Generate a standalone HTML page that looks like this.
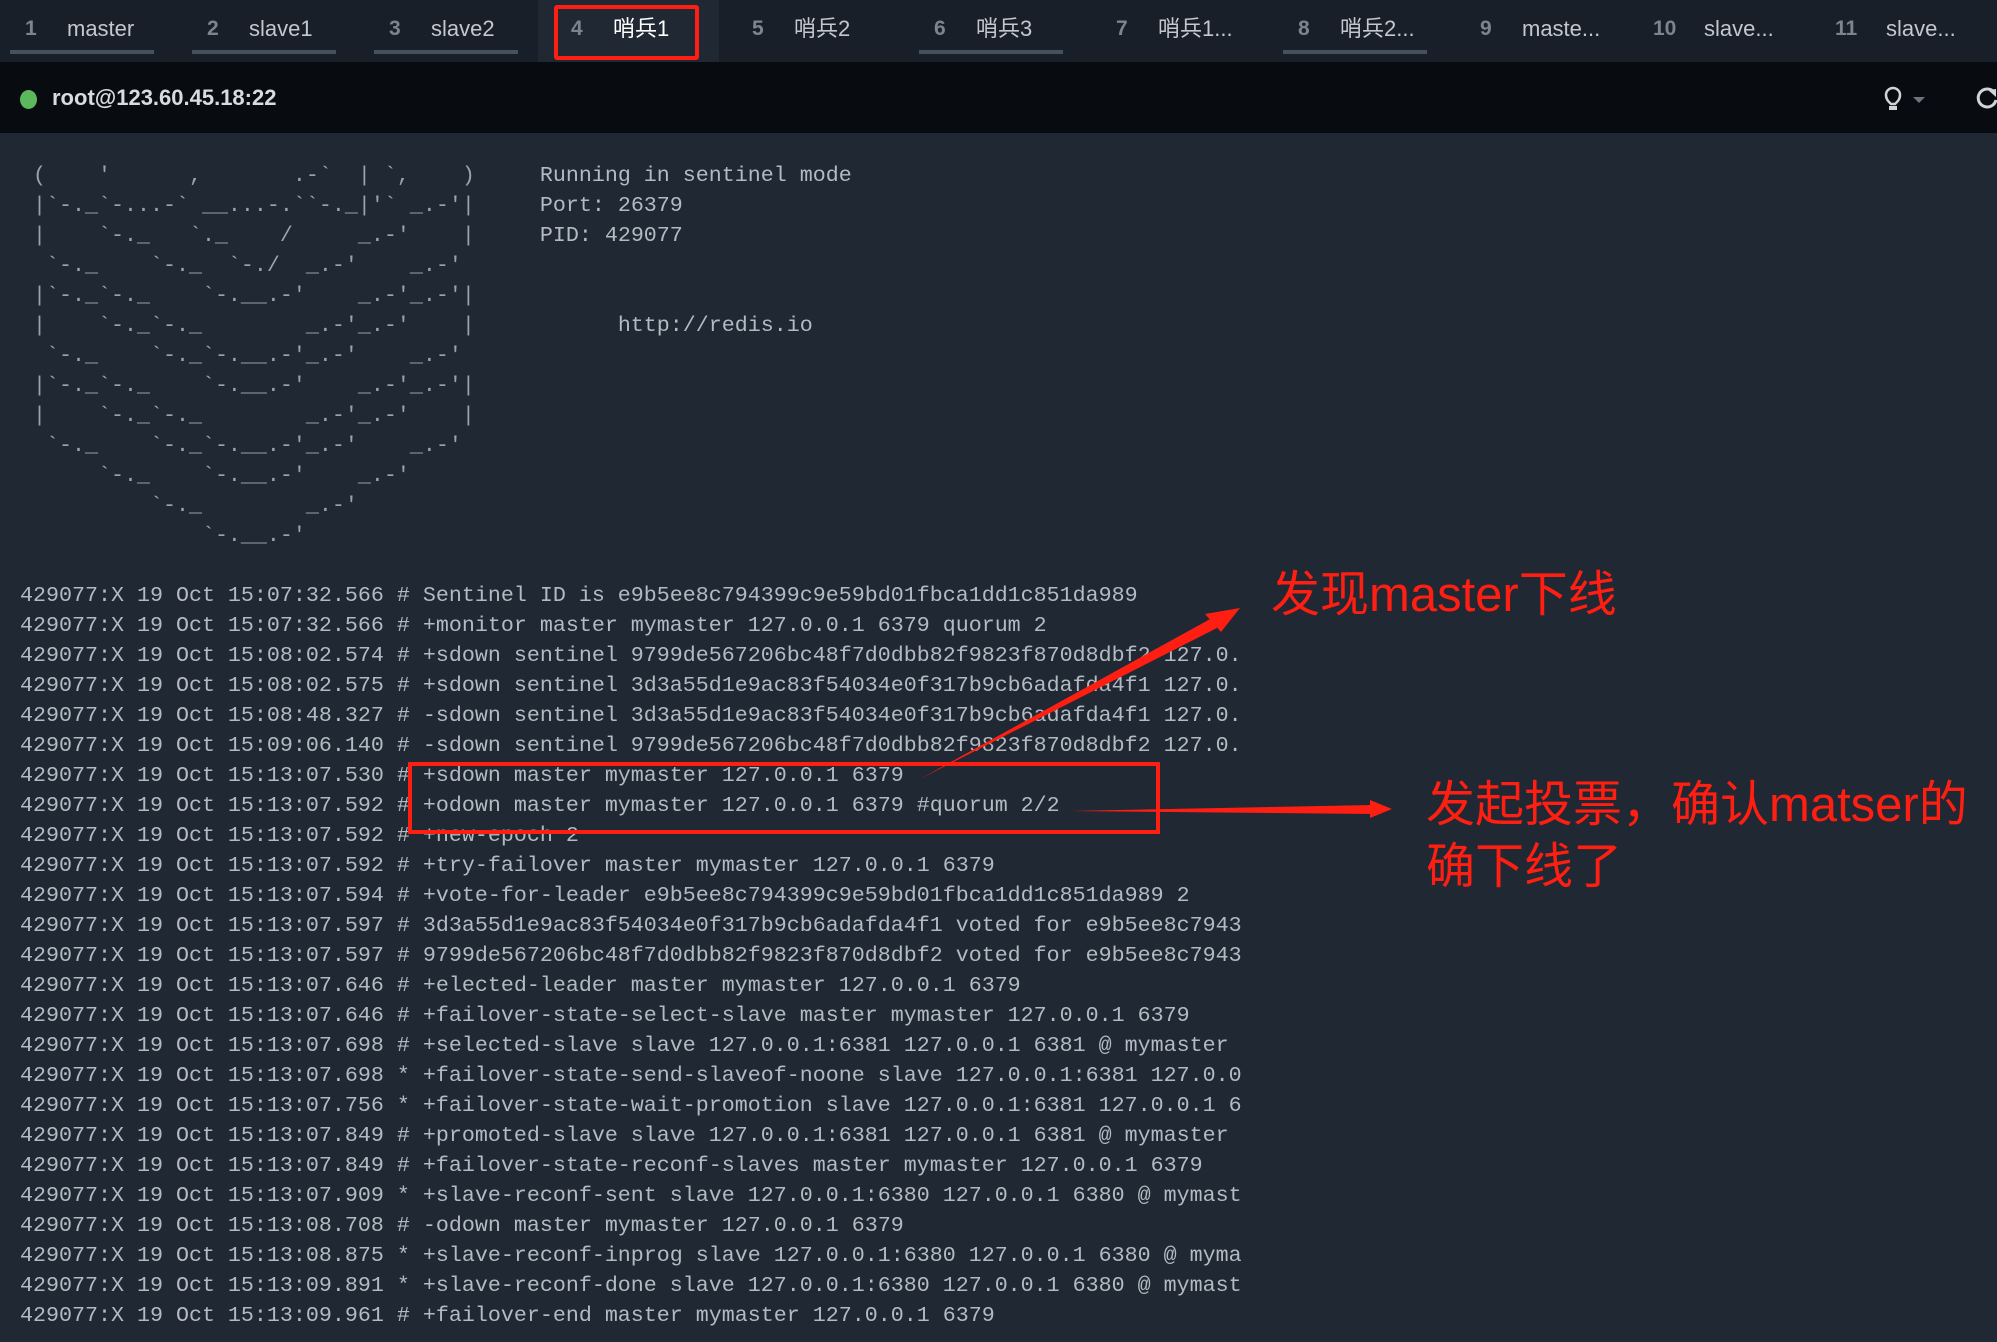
<!DOCTYPE html>
<html><head><meta charset="utf-8"><style>
body{margin:0;width:1997px;height:1342px;background:#1f2833;overflow:hidden;position:relative;font-family:"Liberation Sans","Noto Sans CJK SC",sans-serif}
.tabs{position:absolute;left:0;top:0;width:1997px;height:62px;background:#181f28}
.tab{position:absolute;top:0;height:62px}
.num{position:absolute;top:14px;line-height:30px;height:30px;font-size:21px;color:#7c848d;font-weight:bold}
.lab{position:absolute;top:14px;line-height:30px;height:30px;font-size:22px;color:#c3c8ce;white-space:nowrap}
.ul{position:absolute;top:50px;height:4px;background:#46515c}
.hdr{position:absolute;left:0;top:62px;width:1997px;height:71px;background:#080b0f}
pre{position:absolute;margin:0;font-family:"Liberation Mono",monospace;font-size:21.67px;line-height:30px;color:#b3bac2}
.red{position:absolute;color:#ff1e12;font-size:49px;line-height:62px;white-space:nowrap;font-family:"Liberation Sans","Noto Sans CJK SC",sans-serif}
</style></head><body>
<div class="tabs">
  <div style="position:absolute;left:538px;top:0;width:181px;height:62px;background:#1f2833"></div>
  <div style="position:absolute;left:554px;top:5px;width:137px;height:47px;border:4px solid #ff1e12;border-radius:3px"></div>
  <div class="tab" style="left:0"><span class="num" style="left:25px">1</span><span class="lab" style="left:67px">master</span><div class="ul" style="left:10px;width:144px"></div></div>
  <div class="tab" style="left:182px"><span class="num" style="left:25px">2</span><span class="lab" style="left:67px">slave1</span><div class="ul" style="left:10px;width:144px"></div></div>
  <div class="tab" style="left:364px"><span class="num" style="left:25px">3</span><span class="lab" style="left:67px">slave2</span><div class="ul" style="left:10px;width:144px"></div></div>
  <div class="tab" style="left:546px"><span class="num" style="left:25px">4</span><span class="lab" style="left:67px;color:#fff">哨兵1</span></div>
  <div class="tab" style="left:727px"><span class="num" style="left:25px">5</span><span class="lab" style="left:67px">哨兵2</span></div>
  <div class="tab" style="left:909px"><span class="num" style="left:25px">6</span><span class="lab" style="left:67px">哨兵3</span><div class="ul" style="left:10px;width:144px"></div></div>
  <div class="tab" style="left:1091px"><span class="num" style="left:25px">7</span><span class="lab" style="left:67px">哨兵1...</span></div>
  <div class="tab" style="left:1273px"><span class="num" style="left:25px">8</span><span class="lab" style="left:67px">哨兵2...</span><div class="ul" style="left:10px;width:144px"></div></div>
  <div class="tab" style="left:1455px"><span class="num" style="left:25px">9</span><span class="lab" style="left:67px">maste...</span></div>
  <div class="tab" style="left:1637px"><span class="num" style="left:16px">10</span><span class="lab" style="left:67px">slave...</span></div>
  <div class="tab" style="left:1819px"><span class="num" style="left:16px">11</span><span class="lab" style="left:67px">slave...</span></div>
</div>
<div class="hdr">
  <div style="position:absolute;left:20px;top:28px;width:17px;height:19px;border-radius:50%;background:#5cb85c"></div>
  <div style="position:absolute;left:52px;top:23px;font-size:22px;font-weight:bold;color:#d8dce0">root@123.60.45.18:22</div>
  <svg style="position:absolute;left:1880px;top:20px" width="120" height="34" viewBox="0 0 120 34">
    <path d="M11 22c-3-3-5-5-5-9a7 7 0 0 1 14 0c0 4-2 6-5 9z" fill="none" stroke="#d0d4d8" stroke-width="2.5"/>
    <rect x="9" y="24" width="8" height="4" fill="#d0d4d8"/>
    <path d="M33 15h12l-6 6z" fill="#6d747b"/>
    <path d="M114 10a9 9 0 1 0 2 8" fill="none" stroke="#d0d4d8" stroke-width="3"/>
    <path d="M108 8l8-1 0 8z" fill="#d0d4d8"/>
  </svg>
</div>
<pre style="left:20px;top:161px;color:#9aa2ab"> (    '      ,       .-`  | `,    )     <span style="color:#b3bac2">Running in sentinel mode</span>
 |`-._`-...-` __...-.``-._|'` _.-'|     <span style="color:#b3bac2">Port: 26379</span>
 |    `-._   `._    /     _.-'    |     <span style="color:#b3bac2">PID: 429077</span>
  `-._    `-._  `-./  _.-'    _.-'
 |`-._`-._    `-.__.-'    _.-'_.-'|
 |    `-._`-._        _.-'_.-'    |           <span style="color:#b3bac2">http://redis.io</span>
  `-._    `-._`-.__.-'_.-'    _.-'
 |`-._`-._    `-.__.-'    _.-'_.-'|
 |    `-._`-._        _.-'_.-'    |
  `-._    `-._`-.__.-'_.-'    _.-'
      `-._    `-.__.-'    _.-'
          `-._        _.-'
              `-.__.-'</pre>
<pre style="left:20px;top:581px">429077:X 19 Oct 15:07:32.566 # Sentinel ID is e9b5ee8c794399c9e59bd01fbca1dd1c851da989
429077:X 19 Oct 15:07:32.566 # +monitor master mymaster 127.0.0.1 6379 quorum 2
429077:X 19 Oct 15:08:02.574 # +sdown sentinel 9799de567206bc48f7d0dbb82f9823f870d8dbf2 127.0.
429077:X 19 Oct 15:08:02.575 # +sdown sentinel 3d3a55d1e9ac83f54034e0f317b9cb6adafda4f1 127.0.
429077:X 19 Oct 15:08:48.327 # -sdown sentinel 3d3a55d1e9ac83f54034e0f317b9cb6adafda4f1 127.0.
429077:X 19 Oct 15:09:06.140 # -sdown sentinel 9799de567206bc48f7d0dbb82f9823f870d8dbf2 127.0.
429077:X 19 Oct 15:13:07.530 # +sdown master mymaster 127.0.0.1 6379
429077:X 19 Oct 15:13:07.592 # +odown master mymaster 127.0.0.1 6379 #quorum 2/2
429077:X 19 Oct 15:13:07.592 # +new-epoch 2
429077:X 19 Oct 15:13:07.592 # +try-failover master mymaster 127.0.0.1 6379
429077:X 19 Oct 15:13:07.594 # +vote-for-leader e9b5ee8c794399c9e59bd01fbca1dd1c851da989 2
429077:X 19 Oct 15:13:07.597 # 3d3a55d1e9ac83f54034e0f317b9cb6adafda4f1 voted for e9b5ee8c7943
429077:X 19 Oct 15:13:07.597 # 9799de567206bc48f7d0dbb82f9823f870d8dbf2 voted for e9b5ee8c7943
429077:X 19 Oct 15:13:07.646 # +elected-leader master mymaster 127.0.0.1 6379
429077:X 19 Oct 15:13:07.646 # +failover-state-select-slave master mymaster 127.0.0.1 6379
429077:X 19 Oct 15:13:07.698 # +selected-slave slave 127.0.0.1:6381 127.0.0.1 6381 @ mymaster
429077:X 19 Oct 15:13:07.698 * +failover-state-send-slaveof-noone slave 127.0.0.1:6381 127.0.0
429077:X 19 Oct 15:13:07.756 * +failover-state-wait-promotion slave 127.0.0.1:6381 127.0.0.1 6
429077:X 19 Oct 15:13:07.849 # +promoted-slave slave 127.0.0.1:6381 127.0.0.1 6381 @ mymaster
429077:X 19 Oct 15:13:07.849 # +failover-state-reconf-slaves master mymaster 127.0.0.1 6379
429077:X 19 Oct 15:13:07.909 * +slave-reconf-sent slave 127.0.0.1:6380 127.0.0.1 6380 @ mymast
429077:X 19 Oct 15:13:08.708 # -odown master mymaster 127.0.0.1 6379
429077:X 19 Oct 15:13:08.875 * +slave-reconf-inprog slave 127.0.0.1:6380 127.0.0.1 6380 @ myma
429077:X 19 Oct 15:13:09.891 * +slave-reconf-done slave 127.0.0.1:6380 127.0.0.1 6380 @ mymast
429077:X 19 Oct 15:13:09.961 # +failover-end master mymaster 127.0.0.1 6379</pre>
<div style="position:absolute;left:408px;top:762px;width:744px;height:64px;border:4px solid #ff1e12"></div>
<svg style="position:absolute;left:0;top:0" width="1997" height="1342">
  <polygon points="920,779 1212,618 1217,628" fill="#ff1e12"/>
  <polygon points="1240,608 1205,614 1221,632" fill="#ff1e12"/>
  <polygon points="1070,811 1372,805 1372,814" fill="#ff1e12"/>
  <polygon points="1392,809 1370,800 1370,818" fill="#ff1e12"/>
</svg>
<div class="red" style="left:1271px;top:564px">发现master下线</div>
<div class="red" style="left:1426px;top:774px">发起投票，确认matser的</div>
<div class="red" style="left:1426px;top:836px">确下线了</div>
</body></html>
